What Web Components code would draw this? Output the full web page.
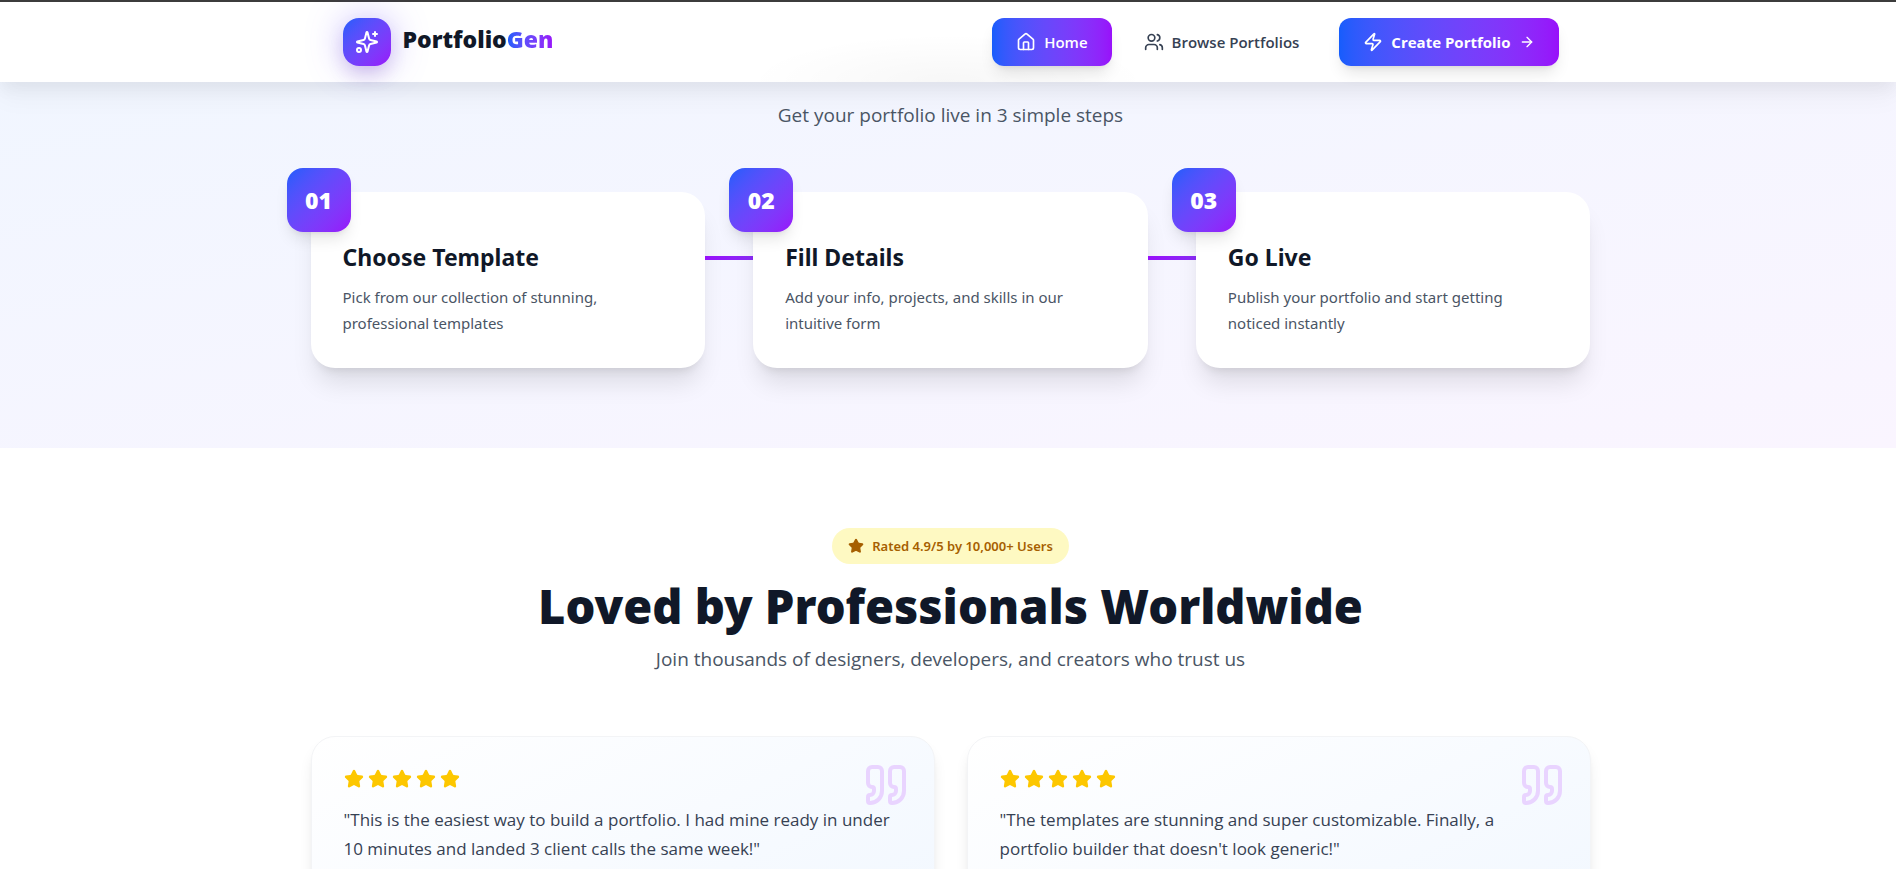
<!DOCTYPE html>
<html lang="en">
<head>
<meta charset="utf-8">
<meta name="viewport" content="width=device-width, initial-scale=1">
<title>PortfolioGen</title>
<style>
  body { margin: 0; background: #fff; color: #101828; font-family: "Noto Sans", "Segoe UI", sans-serif; font-size: 15px; line-height: 26px; }
</style>
</head>
<body>
<portfolio-page></portfolio-page>

<script>
const base = '<style>*,*::before,*::after{box-sizing:border-box}h1,h2,h3,p,ul,ol,blockquote{margin:0;padding:0}ul,ol{list-style:none}</style>';

const define = (name, html) => customElements.define(name, class extends HTMLElement {
  constructor() {
    super();
    this.attachShadow({ mode: 'open' }).innerHTML = base + html;
  }
});

const icons = {
  sparkles: '<path d="M9.937 15.5A2 2 0 0 0 8.5 14.063l-6.135-1.582a.5.5 0 0 1 0-.962L8.5 9.936A2 2 0 0 0 9.937 8.5l1.582-6.135a.5.5 0 0 1 .963 0L14.063 8.5A2 2 0 0 0 15.5 9.937l6.135 1.581a.5.5 0 0 1 0 .964L15.5 14.063a2 2 0 0 0-1.437 1.437l-1.582 6.135a.5.5 0 0 1-.963 0z"/><path d="M20 2v4"/><path d="M22 4h-4"/><circle cx="4" cy="20" r="2"/>',
  home: '<path d="M15 21v-8a1 1 0 0 0-1-1h-4a1 1 0 0 0-1 1v8"/><path d="M3 10a2 2 0 0 1 .709-1.528l7-6a2 2 0 0 1 2.582 0l7 6A2 2 0 0 1 21 10v9a2 2 0 0 1-2 2H5a2 2 0 0 1-2-2z"/>',
  users: '<path d="M16 21v-2a4 4 0 0 0-4-4H6a4 4 0 0 0-4 4v2"/><path d="M16 3.128a4 4 0 0 1 0 7.744"/><path d="M22 21v-2a4 4 0 0 0-3-3.87"/><circle cx="9" cy="7" r="4"/>',
  zap: '<path d="M4 14a1 1 0 0 1-.78-1.63l9.9-10.2a.5.5 0 0 1 .86.46l-1.92 6.02A1 1 0 0 0 13 10h7a1 1 0 0 1 .78 1.63l-9.9 10.2a.5.5 0 0 1-.86-.46l1.92-6.02A1 1 0 0 0 11 14z"/>',
  arrow: '<path d="M5 12h14"/><path d="m12 5 7 7-7 7"/>',
  star: '<path fill="currentColor" d="M11.525 2.295a.53.53 0 0 1 .95 0l2.31 4.679a2.123 2.123 0 0 0 1.595 1.16l5.166.756a.53.53 0 0 1 .294.904l-3.736 3.638a2.123 2.123 0 0 0-.611 1.878l.882 5.14a.53.53 0 0 1-.771.56l-4.618-2.428a2.122 2.122 0 0 0-1.973 0L6.396 21.01a.53.53 0 0 1-.77-.56l.881-5.139a2.122 2.122 0 0 0-.611-1.879L2.16 9.795a.53.53 0 0 1 .294-.906l5.165-.755a2.122 2.122 0 0 0 1.597-1.16z"/>',
  quote: '<path d="M16 3a2 2 0 0 0-2 2v6a2 2 0 0 0 2 2 1 1 0 0 1 1 1v1a2 2 0 0 1-2 2 1 1 0 0 0-1 1v2a1 1 0 0 0 1 1 6 6 0 0 0 6-6V5a2 2 0 0 0-2-2z"/><path d="M5 3a2 2 0 0 0-2 2v6a2 2 0 0 0 2 2 1 1 0 0 1 1 1v1a2 2 0 0 1-2 2 1 1 0 0 0-1 1v2a1 1 0 0 0 1 1 6 6 0 0 0 6-6V5a2 2 0 0 0-2-2z"/>'
};

customElements.define('ui-icon', class extends HTMLElement {
  connectedCallback() {
    if (this.shadowRoot) return;
    this.attachShadow({ mode: 'open' }).innerHTML = `
      <style>
        :host { display: block; flex: none; width: var(--icon-size, 20px); height: var(--icon-size, 20px); }
        svg { display: block; width: 100%; height: 100%; }
      </style>
      <svg viewBox="0 0 24 24" fill="none" stroke="currentColor" stroke-width="2" stroke-linecap="round" stroke-linejoin="round" aria-hidden="true">${icons[this.getAttribute('name')]}</svg>`;
  }
});

define('brand-logo', `
  <style>
    :host { display: block; }
    a { display: flex; align-items: center; gap: 12px; color: inherit; text-decoration: none; }
    .mark { display: grid; place-items: center; width: 48px; height: 48px; border-radius: 16px; color: #fff;
      background: linear-gradient(to bottom right in oklab, #155dfc, #9810fa);
      box-shadow: 0 0 36px rgba(110,80,255,.36), 0 10px 20px -4px rgba(80,20,140,.22); }
    .mark ui-icon { --icon-size: 24px; }
    .word { font-size: 23px; line-height: 32px; font-weight: 900; padding-bottom: 6px; }
    .word span { background: linear-gradient(to right in oklab, #155dfc, #9810fa); -webkit-background-clip: text; background-clip: text; color: transparent; }
  </style>
  <a href="#"><div class="mark"><ui-icon name="sparkles"></ui-icon></div><div class="word">Portfolio<span>Gen</span></div></a>`);

define('nav-link', `
  <style>
    :host { display: block; }
    a { display: flex; align-items: center; gap: 8px; height: 48px; padding: 0 24px; border-radius: 12px;
      color: #364153; text-decoration: none; font-family: "Open Sans", "Segoe UI", sans-serif; font-size: 15px; line-height: 24px; font-weight: 600; white-space: nowrap; }
    :host([filled]) a { color: #fff; background: linear-gradient(to right in oklab, #155dfc, #9810fa);
      box-shadow: 0 10px 15px -3px rgba(0,0,0,.1), 0 4px 6px -4px rgba(0,0,0,.1); }
    :host([strong]) a { font-weight: 700; }
    ::slotted(ui-icon[name="arrow"]) { --icon-size: 16px; }
  </style>
  <a href="#"><slot></slot></a>`);

define('site-header', `
  <style>
    :host { display: block; position: relative; z-index: 2; border-top: 2px solid #3c3c3c;
      background: radial-gradient(ellipse 200px 48px at 50% 100%, rgba(0,0,0,.03), transparent) no-repeat, #fff;
      box-shadow: 0 16px 24px rgba(0,0,0,.04), 0 6px 16px rgba(0,0,0,.05); }
    .bar { display: flex; align-items: center; justify-content: space-between; max-width: 1280px; margin: 0 auto; padding: 16px 32px; }
    .wrap { padding-left: var(--page-inset); }
    nav { display: flex; align-items: center; gap: 8px; }
    nav .cta { margin-left: 8px; }
  </style>
  <div class="wrap"><div class="bar">
    <brand-logo></brand-logo>
    <nav aria-label="Main">
      <nav-link filled><ui-icon name="home"></ui-icon>Home</nav-link>
      <nav-link><ui-icon name="users"></ui-icon>Browse Portfolios</nav-link>
      <nav-link class="cta" filled strong><ui-icon name="zap"></ui-icon>Create Portfolio<ui-icon name="arrow"></ui-icon></nav-link>
    </nav>
  </div></div>`);

define('step-card', `
  <style>
    :host { display: block; position: relative; }
    .card { position: relative; height: 100%; padding: 48px 32px 32px; border-radius: 24px; background: #fff;
      box-shadow: 0 20px 25px -5px rgba(0,0,0,.1), 0 8px 10px -6px rgba(0,0,0,.1); }
    .num { position: absolute; top: -24px; left: -24px; display: grid; place-items: center; width: 64px; height: 64px; border-radius: 16px;
      color: #fff; font-size: 23px; line-height: 32px; font-weight: 900;
      background: linear-gradient(to bottom right in oklab, #155dfc, #9810fa);
      box-shadow: 0 10px 15px -3px rgba(0,0,0,.1), 0 4px 6px -4px rgba(0,0,0,.1); }
    h3 { margin-bottom: 10px; font-size: 23px; line-height: 34px; font-weight: 700; color: #101828; }
    p { color: #4a5565; font-size: 15px; line-height: 26px; }
    :host([linked])::after { content: ""; position: absolute; top: 64px; left: 100%; width: 48px; height: 4px; background: linear-gradient(to right, #9810fa, #8a2cf6); }
  </style>
  <div class="card">
    <div class="num"><slot name="num"></slot></div>
    <h3><slot name="title"></slot></h3>
    <p><slot></slot></p>
  </div>`);

define('steps-section', `
  <style>
    :host { display: block; padding: 18px 0 80px var(--page-inset); background: linear-gradient(to bottom right, #eff6ff -20%, #faf5ff); }
    .lead { margin-bottom: 62px; text-align: center; font-family: "Open Sans", "Segoe UI", sans-serif; font-size: 19px; line-height: 30px; color: #4a5565; }
    .grid { display: grid; grid-template-columns: repeat(3, 1fr); gap: 48px; max-width: 1280px; margin: 0 auto; }
  </style>
  <p class="lead">Get your portfolio live in 3 simple steps</p>
  <div class="grid">
    <step-card linked><span slot="num">01</span><span slot="title">Choose Template</span>Pick from our collection of stunning, professional templates</step-card>
    <step-card linked><span slot="num">02</span><span slot="title">Fill Details</span>Add your info, projects, and skills in our intuitive form</step-card>
    <step-card><span slot="num">03</span><span slot="title">Go Live</span>Publish your portfolio and start getting noticed instantly</step-card>
  </div>`);

define('rating-badge', `
  <style>
    :host { display: flex; align-items: center; gap: 8px; height: 36px; padding: 0 16px; border-radius: 18px;
      background: #fef9c2; color: #a65f00; font-size: 13px; line-height: 20px; font-weight: 600; }
    ui-icon { --icon-size: 16px; }
  </style>
  <ui-icon name="star"></ui-icon><slot></slot>`);

define('testimonial-card', `
  <style>
    :host { display: block; position: relative; min-height: 288px; padding: 32px; border: 1px solid #f3f4f6; border-radius: 24px;
      background: linear-gradient(to bottom right, #fff, #eff6ff);
      box-shadow: 0 10px 15px -3px rgba(0,0,0,.1), 0 4px 6px -4px rgba(0,0,0,.1); }
    .mark { position: absolute; top: 24px; right: 24px; --icon-size: 48px; color: #e9d4ff; }
    .stars { display: flex; gap: 4px; margin-bottom: 16px; color: #fdc700; }
    blockquote { position: relative; font-family: "Open Sans", "Segoe UI", sans-serif; font-size: 17px; line-height: 29px; color: #364153; }
  </style>
  <ui-icon class="mark" name="quote"></ui-icon>
  <div class="stars" role="img" aria-label="5 out of 5 stars">${'<ui-icon name="star"></ui-icon>'.repeat(5)}</div>
  <blockquote><slot></slot></blockquote>`);

define('testimonials-section', `
  <style>
    :host { display: block; padding: 80px 0 80px var(--page-inset); background: #fff; }
    .head { display: flex; flex-direction: column; align-items: center; margin-bottom: 62px; text-align: center; }
    h2 { margin: 18px 0 14px; font-size: 47px; line-height: 48px; font-weight: 900; color: #101828; }
    .lead { font-family: "Open Sans", "Segoe UI", sans-serif; font-size: 19px; line-height: 30px; color: #4a5565; }
    .grid { display: grid; grid-template-columns: repeat(2, 1fr); gap: 32px; max-width: 1280px; margin: 0 auto; }
  </style>
  <div class="head">
    <rating-badge>Rated 4.9/5 by 10,000+ Users</rating-badge>
    <h2>Loved by Professionals Worldwide</h2>
    <p class="lead">Join thousands of designers, developers, and creators who trust us</p>
  </div>
  <div class="grid">
    <testimonial-card>"This is the easiest way to build a portfolio. I had mine ready in under 10 minutes and landed 3 client calls the same week!"</testimonial-card>
    <testimonial-card>"The templates are stunning and super customizable. Finally, a portfolio builder that doesn't look generic!"</testimonial-card>
  </div>`);

define('portfolio-page', `
  <style>:host { display: block; height: 100vh; overflow: hidden; --page-inset: 5px; }</style>
  <site-header></site-header>
  <main><steps-section></steps-section><testimonials-section></testimonials-section></main>`);
</script>
</body>
</html>
